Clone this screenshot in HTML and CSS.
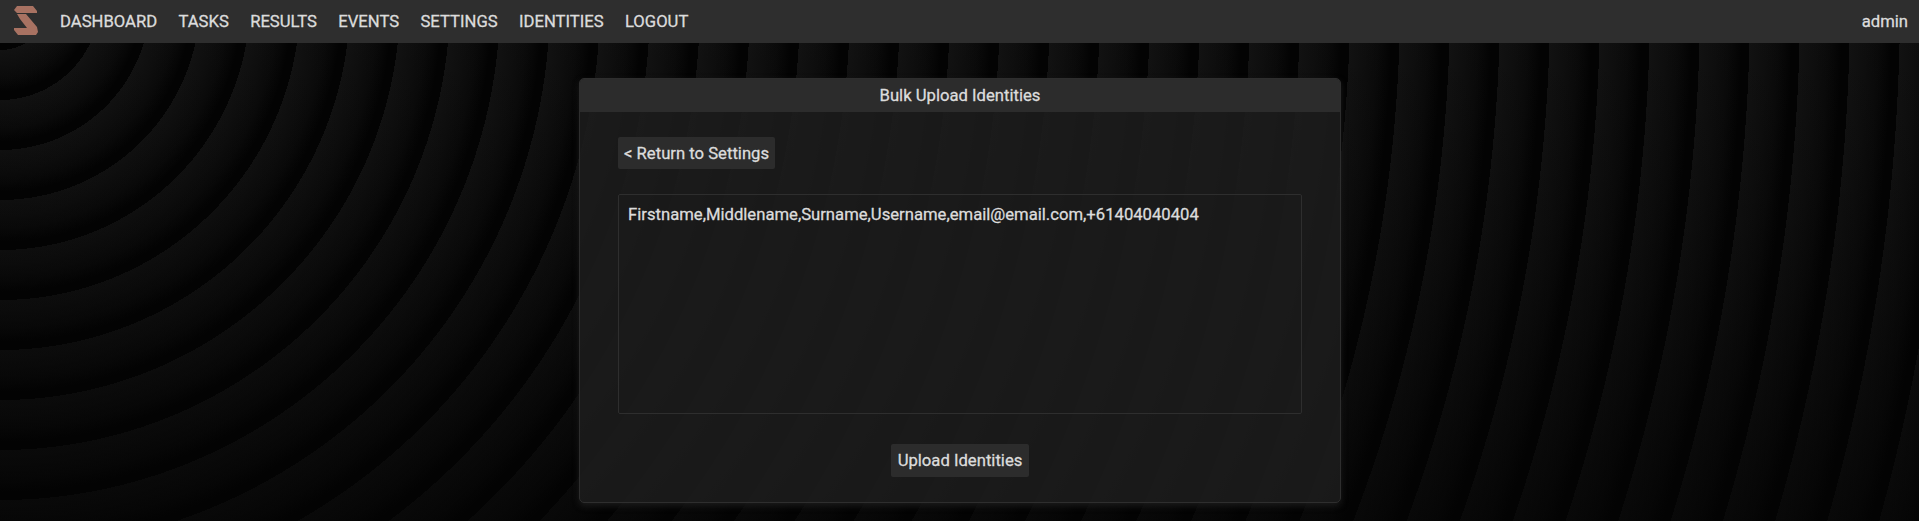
FILE: index.html
```html
<!DOCTYPE html>
<html lang="en">
<head>
<meta charset="utf-8">
<title>Bulk Upload Identities</title>
<link rel="stylesheet" href="styles.css">
</head>
<body>
<header class="navbar">
  <svg class="logo" width="24" height="29" viewBox="0 0 24 29"><path d="M3 0H19L23 5V7H3L0 4ZM3 8H12L23 21L24 26L22 29H4L0 24V22H13L6 13Z"/></svg>
  <nav class="links">
    <a>DASHBOARD</a><a>TASKS</a><a>RESULTS</a><a>EVENTS</a><a>SETTINGS</a><a>IDENTITIES</a><a>LOGOUT</a>
  </nav>
  <span class="user">admin</span>
</header>
<main class="card">
  <h1 class="card-title">Bulk Upload Identities</h1>
  <div class="card-body">
    <button class="btn back">&lt; Return to Settings</button>
    <textarea class="bulk" spellcheck="false">Firstname,Middlename,Surname,Username,email@email.com,+61404040404</textarea>
    <button class="btn upload">Upload Identities</button>
  </div>
</main>
</body>
</html>
```
FILE: styles.css
```css
* { box-sizing: border-box; }
html { height: 100%; background: #030303; }
body {
  margin: 0;
  height: 100%;
  overflow: hidden;
  color: #dcdcdc;
  font: 12.5pt/19px Roboto, sans-serif;
  -webkit-text-stroke: 0.3px #dcdcdc;
  background:
    linear-gradient(rgba(3, 3, 3, 0), rgba(3, 3, 3, 0.65)),
    repeating-radial-gradient(circle at 0 0, #131313, #0f0f0f 16px, #0b0b0b 28px, #030303 42px, #030303 50px);
}
.navbar {
  display: flex;
  height: 43px;
  padding: 0 11px 0 14px;
  align-items: center;
  background: #2e2e2e;
}
.logo { fill: #a87262; margin-top: -2px; }
.links { display: flex; gap: 21.3px; margin-left: 22px; }
.user { margin-left: auto; }
.card {
  width: 762px;
  height: 425px;
  margin: 35px auto 0 579px;
  border: 1px solid #2e2e2e;
  border-radius: 5px;
  overflow: hidden;
  background: rgba(28, 28, 28, 0.88);
  box-shadow: 0 3px 6px #1a1a1a;
}
.card-title {
  height: 33px;
  margin: 0;
  font: inherit;
  line-height: 34px;
  text-align: center;
  background: #2c2c2c;
}
.card-body {
  display: flex;
  flex-direction: column;
  align-items: flex-start;
  padding: 25px 38px;
}
.btn {
  height: 32px;
  padding: 0 6px;
  border: 0;
  border-radius: 2px;
  color: inherit;
  font: inherit;
  background: #2c2c2c;
}
.bulk {
  width: 684px;
  height: 220px;
  margin: 25px 0 30px;
  padding: 10px 9px;
  border: 1px solid #2e2e2e;
  border-radius: 2px;
  resize: none;
  color: inherit;
  font: inherit;
  background: transparent;
}
.upload { height: 33px; padding: 0 7px; align-self: center; }
```
